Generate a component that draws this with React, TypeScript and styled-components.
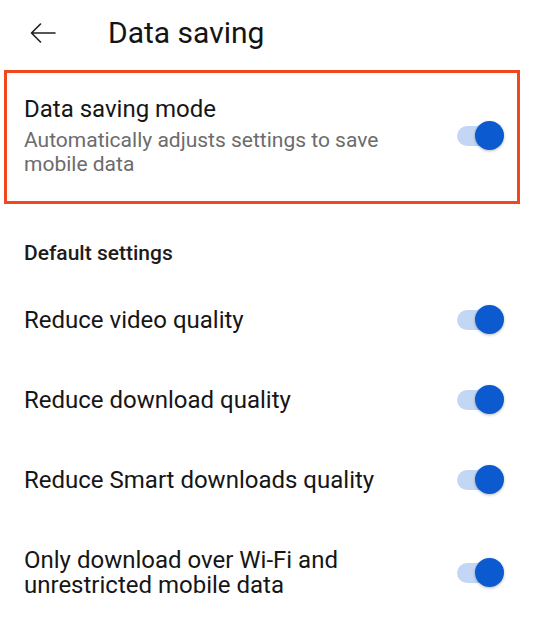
import React from 'react';
import styled, { createGlobalStyle } from 'styled-components';

const GlobalStyle = createGlobalStyle`
  * { box-sizing: border-box; }
  body {
    margin: 0;
    background: #ffffff;
    font-family: Roboto, "Liberation Sans", sans-serif;
    color: #1a1a1a;
  }
`

const Page = styled.div`
  width: 540px;
  min-height: 631px;
  background: #ffffff;
`

const Header = styled.header`
  display: flex;
  align-items: center;
  height: 66px;
  padding-left: 30px;
`

const BackButton = styled.button`
  display: flex;
  align-items: center;
  padding: 0;
  border: 0;
  background: none;
  width: 78px;
  height: 24px;
  color: #1f1f1f;
`

const Title = styled.h1`
  margin: 0;
  font-size: 30px;
  font-weight: 400;
  line-height: 36px;
  color: #141414;
`

const Highlight = styled.div`
  display: flex;
  align-items: center;
  justify-content: space-between;
  margin: 4px 20px 0 4px;
  padding: 22px 13px 25px 17px;
  border: 3px solid #f1471f;
`

const TextBlock = styled.div`
  display: flex;
  flex-direction: column;
`

const Label = styled.div`
  font-size: 24px;
  line-height: 28px;
  color: #161616;
`

const Hint = styled.div`
  margin-top: 5px;
  font-size: 21px;
  line-height: 24px;
  color: #6c6c6c;
  max-width: 390px;
`

const SectionTitle = styled.div`
  padding: 36px 24px 14px;
  font-size: 21px;
  font-weight: 500;
  line-height: 26px;
  color: #1c1c1c;
`

const Row = styled.div<{ $tall?: boolean }>`
  display: flex;
  align-items: center;
  justify-content: space-between;
  min-height: 80px;
  padding: ${p => (p.$tall ? '28px 36px 28px 24px' : '0 36px 0 24px')};
`

const RowLabel = styled(Label)`
  max-width: 390px;
  line-height: 25px;
`

const Switch = styled.div`
  position: relative;
  flex: none;
  width: 47px;
  height: 30px;
`

const Track = styled.span`
  position: absolute;
  left: 0;
  top: 5px;
  width: 40px;
  height: 20px;
  border-radius: 10px;
  background: #c3d6f4;
`

const Knob = styled.span`
  position: absolute;
  right: 0;
  top: 0;
  width: 29px;
  height: 29px;
  border-radius: 50%;
  background: #0b5ad0;
  box-shadow: 0 1px 3px rgba(0, 0, 0, 0.28);
`

const Toggle = () => (
  <Switch>
    <Track />
    <Knob />
  </Switch>
)

const rows = [
  'Reduce video quality',
  'Reduce download quality',
  'Reduce Smart downloads quality',
]

const App = () => {
  return (
    <>
      <GlobalStyle />
      <Page>
        <Header>
          <BackButton aria-label="Back">
            <svg width="26" height="20" viewBox="0 0 26 20" fill="none">
              <path d="M25 10H1.5M10.5 1L1.5 10l9 9" stroke="currentColor" strokeWidth="1.6" strokeLinecap="round" strokeLinejoin="round" />
            </svg>
          </BackButton>
          <Title>Data saving</Title>
        </Header>

        <Highlight>
          <TextBlock>
            <Label>Data saving mode</Label>
            <Hint>Automatically adjusts settings to save mobile data</Hint>
          </TextBlock>
          <Toggle />
        </Highlight>

        <SectionTitle>Default settings</SectionTitle>

        {rows.map(r => (
          <Row key={r}>
            <RowLabel>{r}</RowLabel>
            <Toggle />
          </Row>
        ))}
        <Row $tall>
          <RowLabel>Only download over Wi-Fi and unrestricted mobile data</RowLabel>
          <Toggle />
        </Row>
      </Page>
    </>
  )
}

export default App;
